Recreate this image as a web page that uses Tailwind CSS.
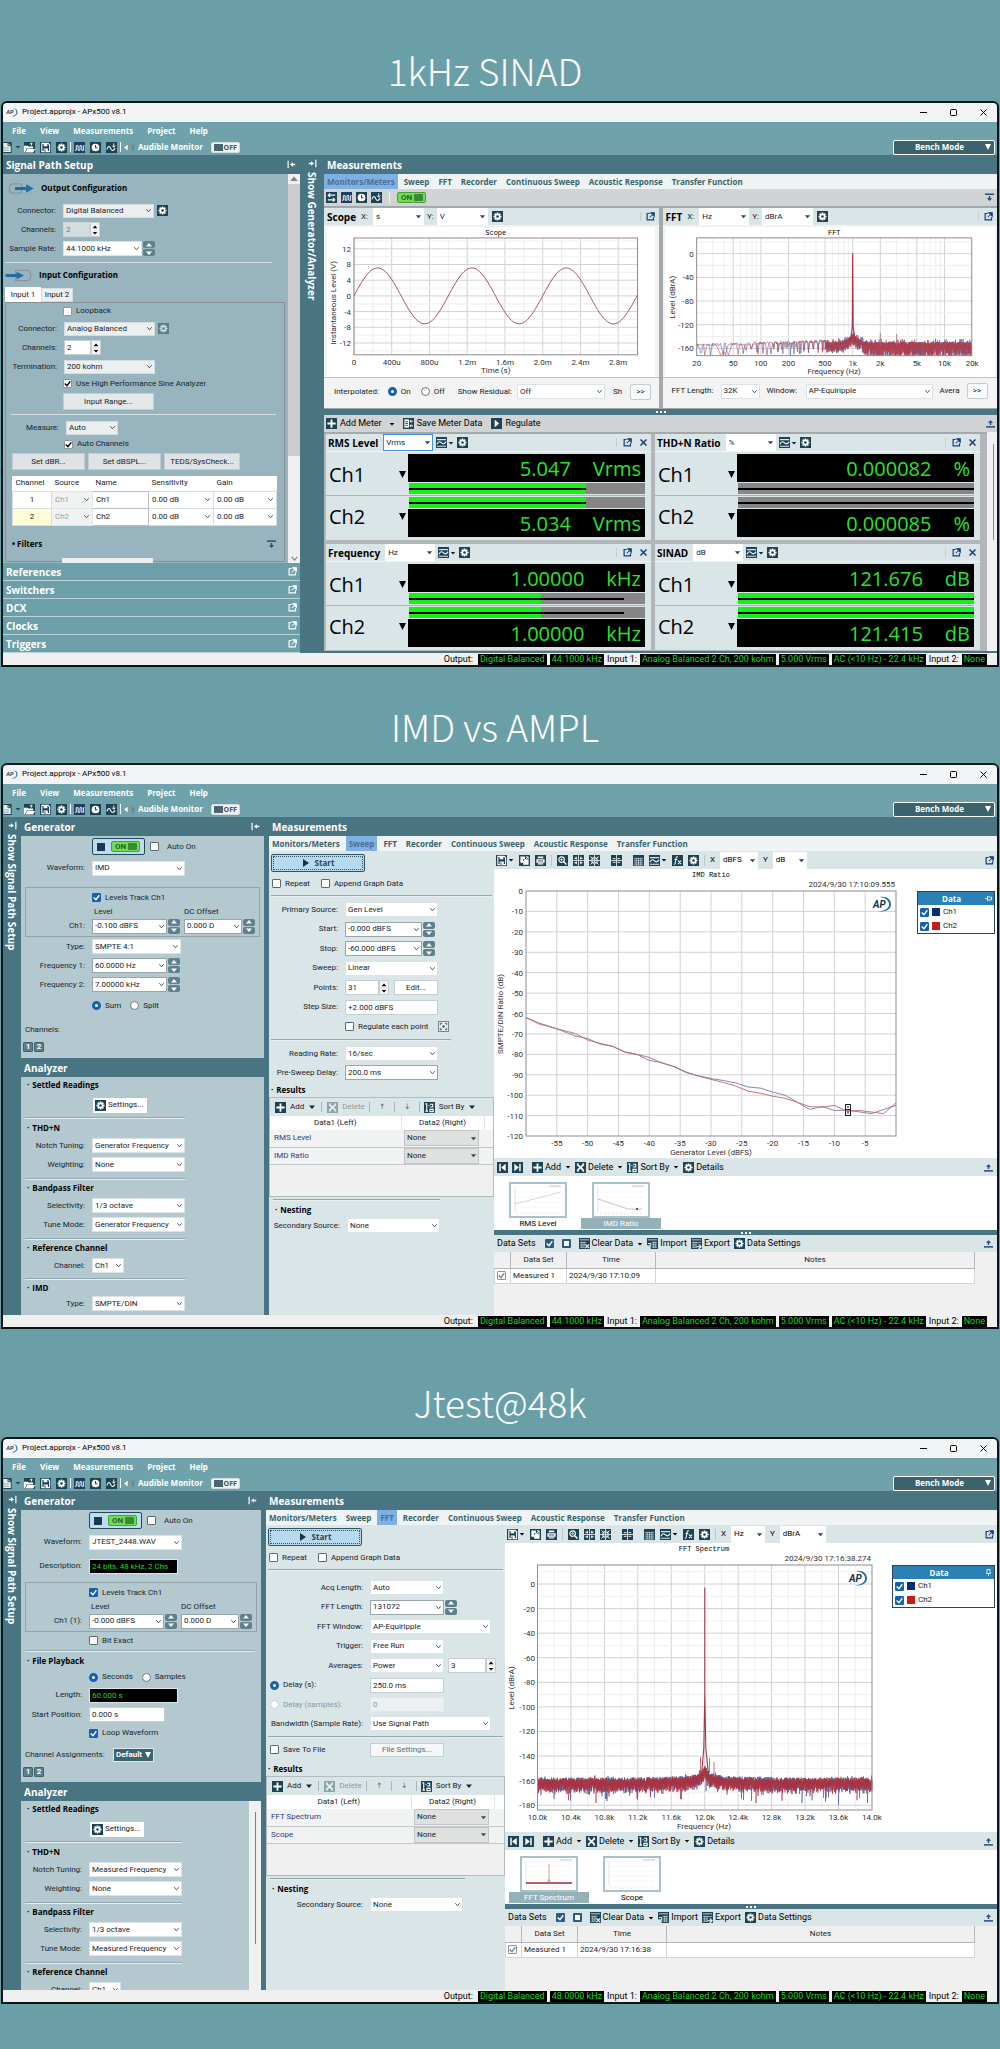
<!DOCTYPE html>
<html lang="en">
<head>
    <meta charset="UTF-8">
    <meta name="viewport" content="width=device-width, initial-scale=1.0">
    <title>APx500 Measurements</title>
    <script src="https://cdn.jsdelivr.net/npm/@tailwindcss/browser@4"></script>
</head>
<body class="bg-[#6b9fa8] font-['Roboto','Noto_Sans',sans-serif] text-[8px] leading-none text-[#16242a]">

    <!-- Icon sprite -->
    <svg class="hidden" xmlns="http://www.w3.org/2000/svg">
        <symbol id="gear" viewBox="0 0 12 12"><rect width="12" height="12" fill="#1d4254"/><g stroke="#fff" stroke-width="1.8"><path d="M6 1.6v8.8M1.6 6h8.8M2.9 2.9l6.2 6.2M9.1 2.9L2.9 9.1"/></g><circle cx="6" cy="6" r="3.2" fill="#fff"/><circle cx="6" cy="6" r="1.4" fill="#1d4254"/></symbol>
        <symbol id="doc" viewBox="0 0 9 12"><rect width="9" height="12" fill="#1d4254"/><path d="M0 1h5l3 3v7H0z" fill="#e8eef0"/><path d="M5 1v3h3" fill="none" stroke="#1d4254"/><path d="M0 6.500h6M0 9h6" stroke="#8fa3aa"/></symbol>
        <symbol id="open" viewBox="0 0 12 12"><rect width="12" height="12" fill="#1d4254"/><path d="M0 4h4l1 1h5v2H3l-2 4.500H0z" fill="#fff"/><path d="M3.500 7.500H12L10 11.500H1.500z" fill="#fff"/><path d="M8 4V1M6.500 2.500L8 1l1.500 1.500" stroke="#fff" fill="none"/></symbol>
        <symbol id="save" viewBox="0 0 12 12"><rect width="12" height="12" fill="#1d4254"/><path d="M2 1.500h7l1.500 1.500v7.500H2z" fill="none" stroke="#fff" stroke-width="1.200"/><path d="M4 1.500h4v3H4zM4 7h4.500v4H4z" fill="#fff"/><path d="M5.500 8v3" stroke="#1d4254"/></symbol>
        <symbol id="square" viewBox="0 0 12 12"><rect width="12" height="12" fill="#1d3f63"/><path d="M1 9h1.500V4h2v5h2V4h2v5h2V4h1" fill="none" stroke="#fff"/></symbol>
        <symbol id="clock" viewBox="0 0 12 12"><rect width="12" height="12" fill="#1d4254"/><circle cx="6" cy="6" r="4.200" fill="#fff"/><path d="M6 3.200V6.300h2" fill="none" stroke="#1d4254" stroke-width="1.100"/></symbol>
        <symbol id="sine" viewBox="0 0 12 12"><rect width="12" height="12" fill="#1d4254"/><path d="M1 8c1-4 3-4 4-1s3 3 5 0" fill="none" stroke="#fff" stroke-width="1.200"/><path d="M8.500 1.500v4M6.800 4l1.700 1.800L10.200 4" fill="none" stroke="#fff"/></symbol>
        <symbol id="speaker" viewBox="0 0 12 12"><path d="M0 6l4-3v6z" fill="#fff"/><path d="M5 3.500L9 .5v11L5 8.500z" fill="#8a9296"/><path d="M10 3v6" stroke="#5d6a6f"/></symbol>
        <symbol id="swap" viewBox="0 0 12 12"><rect width="12" height="12" fill="#1d4254"/><path d="M2 3.500h8M4.500 1.500l-2 2 2 2M2 8.500h8M7.500 6.500l2 2-2 2" fill="none" stroke="#fff" stroke-width="1.400"/></symbol>
        <symbol id="plus" viewBox="0 0 12 12"><rect width="12" height="12" fill="#1d4254"/><path d="M6 1.500v9M1.500 6h9" stroke="#fff" stroke-width="2"/></symbol>
        <symbol id="del" viewBox="0 0 12 12"><rect width="12" height="12" fill="#1d4254"/><path d="M2.500 2.500l7 7M9.500 2.500l-7 7" stroke="#fff" stroke-width="2"/><path d="M2 2h2M8 2h2M2 10h2M8 10h2" stroke="#fff"/></symbol>
        <symbol id="savemeter" viewBox="0 0 12 12"><rect width="12" height="12" fill="#1d4254"/><path d="M1.500 1.500h5v9h-5z" fill="#fff"/><path d="M2.500 4h3M2.500 6h3M2.500 8h3" stroke="#1d4254"/><path d="M11 3.500H7.500M11 8.500H7.500M9 2L7.500 3.500 9 5M9 7L7.500 8.500 9 10" fill="none" stroke="#fff"/></symbol>
        <symbol id="run" viewBox="0 0 12 12"><rect width="12" height="12" fill="#1d4254"/><path d="M4 2l5 4-5 4z" fill="#fff"/></symbol>
        <symbol id="plot" viewBox="0 0 12 12"><rect width="12" height="12" fill="#1d4254"/><path d="M1 2.200h10v1.300H1zM1 9.500h10v1H1z" fill="#dce6ea"/><path d="M1 8c2-4 3.500-3 5-1.500S9 8 11 5" fill="none" stroke="#fff" stroke-width="1.200"/></symbol>
        <symbol id="ext" viewBox="0 0 12 12"><path d="M5 2H1.500v8.500H10V7" fill="none" stroke="currentColor" stroke-width="1.600"/><path d="M6.500 1H11v4.500zM5 7l4-4" fill="currentColor" stroke="currentColor" stroke-width="1.400"/></symbol>
        <symbol id="first" viewBox="0 0 12 12"><rect width="12" height="12" fill="#1d4254"/><path d="M3.300 2v8" stroke="#fff" stroke-width="1.600"/><path d="M9.500 2v8L4.500 6z" fill="#fff"/></symbol>
        <symbol id="last" viewBox="0 0 12 12"><rect width="12" height="12" fill="#1d4254"/><path d="M8.700 2v8" stroke="#fff" stroke-width="1.600"/><path d="M2.500 2v8l5-4z" fill="#fff"/></symbol>
        <symbol id="sort" viewBox="0 0 12 12"><rect width="12" height="12" fill="#1d4254"/><path d="M1.500 2h1.500v8M1.500 10h3M6.500 2.500h3v3h-3M6.500 8h3.500v2.500H6.500zM5 4h1" fill="none" stroke="#fff" stroke-width="1.200"/></symbol>
        <symbol id="copy" viewBox="0 0 12 12"><rect width="12" height="12" fill="#1d4254"/><path d="M1.500 1.500h5v3h-2v4h-3zM6 5h4.500v5.500H4.500V8z" fill="#fff"/><path d="M4 8L9.500 2.500M7.500 2h2.500v2.500" fill="none" stroke="#fff"/></symbol>
        <symbol id="print" viewBox="0 0 12 12"><rect width="12" height="12" fill="#1d4254"/><path d="M3 1.500h6v2H3zM1.500 4.500h9v4h-9z" fill="#fff"/><path d="M3 9.700h6" stroke="#fff" stroke-width="1.200"/><path d="M3 6.500h6" stroke="#1d4254"/></symbol>
        <symbol id="zoom" viewBox="0 0 12 12"><rect width="12" height="12" fill="#1d4254"/><circle cx="5" cy="5" r="3" fill="none" stroke="#fff" stroke-width="1.200"/><path d="M7.300 7.300l3 3" stroke="#fff" stroke-width="1.700"/><path d="M3.500 5h3M5 3.500v3" stroke="#fff" stroke-width=".8"/></symbol>
        <symbol id="expand" viewBox="0 0 12 12"><rect width="12" height="12" fill="#1d4254"/><path d="M6 0v12M0 6h12" stroke="#d9e4e7"/><path d="M1.500 3.500h3M3.500 2v3M7.500 3.500h3M8.500 2v3M1.500 8.500h3M3.500 7v3M7.500 8.500h3M8.500 7v3" stroke="#fff" stroke-width="1.100"/></symbol>
        <symbol id="shrink" viewBox="0 0 12 12"><rect width="12" height="12" fill="#1d4254"/><path d="M6 0v12M0 6h12" stroke="#d9e4e7"/><path d="M1.500 1.500l3 3M4.500 2v2.500H2M10.500 1.500l-3 3M7.500 2v2.500H10M1.500 10.500l3-3M2 7.500h2.500V10M10.500 10.500l-3-3M10 7.500H7.500V10" fill="none" stroke="#fff"/></symbol>
        <symbol id="center" viewBox="0 0 12 12"><rect width="12" height="12" fill="#1d4254"/><path d="M6 0v12M0 6h12" stroke="#d9e4e7"/><path d="M2 4h3M7 4h3M2 8h3M7 8h3" stroke="#fff"/></symbol>
        <symbol id="grid" viewBox="0 0 12 12"><rect width="12" height="12" fill="#1d4254"/><path d="M1 4h10M1 6.300h10M1 8.600h10M1 10.800h10M3.500 3v8.500M6 3v8.500M8.500 3v8.500" stroke="#c9d6db" stroke-width=".8"/></symbol>
        <symbol id="fx" viewBox="0 0 12 12"><rect width="12" height="12" fill="#1d4254"/><path d="M6.500 2c-2-.5-2 1-2.300 3L3.500 9c-.2 1-.8 1.200-1.500 1M2.800 5h3M6.500 6l3.500 4M10 6l-3.500 4" fill="none" stroke="#fff" stroke-width="1.100"/></symbol>
        <symbol id="data" viewBox="0 0 12 12"><rect width="12" height="12" fill="#1d4254"/><path d="M1 2h10" stroke="#c9d6db"/><path d="M1 5h7M1 7.500h6M1 10h5M3 4v7M5.500 4v7" stroke="#c9d6db" stroke-width=".8"/><path d="M7 7l4 4M11 7l-4 4" stroke="#fff" stroke-width="1.300"/></symbol>
        <symbol id="import" viewBox="0 0 12 12"><rect width="12" height="12" fill="#1d4254"/><path d="M1 2h10" stroke="#c9d6db"/><path d="M5 5h6M5 7.500h6M5 10h6M7 4v7M9 4v7" stroke="#c9d6db" stroke-width=".8"/><path d="M0 8h4v4H0z" fill="#d9e4e7"/><path d="M1 6h3v3" fill="none" stroke="#fff"/></symbol>
        <symbol id="export" viewBox="0 0 12 12"><rect width="12" height="12" fill="#1d4254"/><path d="M1 2h10" stroke="#c9d6db"/><path d="M1 5h10M1 7.500h5M1 10h5M3 4v7M5.500 4v7" stroke="#c9d6db" stroke-width=".8"/><path d="M6 9.500h4.500M8.500 7l2.500 2.500L8.500 12" fill="none" stroke="#fff" stroke-width="1.200"/></symbol>
        <symbol id="dockdown" viewBox="0 0 12 12"><path d="M0 1.500h12" stroke="#2b4a7a" stroke-width="2"/><path d="M2.500 7h7L6 10.500zM5 4h2v3H5z" fill="#2b4a7a"/></symbol>
        <symbol id="dockup" viewBox="0 0 12 12"><path d="M0 10.500h12" stroke="#2b4a7a" stroke-width="2"/><path d="M2.500 5h7L6 1.500zM5 5h2v3H5z" fill="#2b4a7a"/></symbol>
        <symbol id="collapse" viewBox="0 0 12 12"><path d="M1.500 1v10" stroke="#fff" stroke-width="1.600"/><path d="M4 6l4-3v2h3v2H8v2z" fill="#fff"/></symbol>
        <symbol id="expandbar" viewBox="0 0 12 12"><path d="M10.500 1v10" stroke="#fff" stroke-width="1.600"/><path d="M8 6L4 3v2H1v2h3v2z" fill="#fff"/></symbol>
        <symbol id="regpt" viewBox="0 0 12 12"><rect x=".5" y=".5" width="11" height="11" fill="#e9eff1" stroke="#6d7f86"/><path d="M2.500 4.500v-2h2M7.500 2.500h2v2M9.500 7.500v2h-2M4.500 9.500h-2v-2" fill="none" stroke="#43535a"/><circle cx="6" cy="6" r="1.300" fill="#43535a"/></symbol>
        <symbol id="outcfg" viewBox="0 0 28 14"><path d="M14 2H4a3 3 0 0 0-3 3v4a3 3 0 0 0 3 3h10z" fill="none" stroke="#8f9699" stroke-width="1.500"/><path d="M7 5.500h12V2.500L27 7l-8 4.500V8.500H7z" fill="#1d6fa5"/></symbol>
        <symbol id="incfg" viewBox="0 0 28 14"><path d="M11 1.500h12a4 4 0 0 1 4 4v3a4 4 0 0 1-4 4H11z" fill="none" stroke="#8f9699" stroke-width="1.500"/><path d="M0 5.500h12V3l8 4-8 4V8.500H0z" fill="#1d6fa5"/></symbol>
        <symbol id="chev" viewBox="0 0 8 8"><path d="M1.500 2.500L4 5.500l2.500-3" fill="none" stroke="currentColor"/></symbol>
        <symbol id="caret" viewBox="0 0 8 8"><path d="M1 2.500h6L4 6z" fill="currentColor"/></symbol>
        <symbol id="drop" viewBox="0 0 8 8"><path d="M0 0h8L4 8z" fill="currentColor"/></symbol>
        <symbol id="up" viewBox="0 0 8 8"><path d="M1 5.500h6L4 2z" fill="currentColor"/></symbol>
        <symbol id="tick" viewBox="0 0 8 8"><path d="M1.500 4l2 2 3-4" fill="none" stroke="currentColor" stroke-width="1.200"/></symbol>
    </svg>

    <main class="pb-[46px]">
        <h1 class="flex h-[101px] items-center justify-center pt-[39px] pr-[30px] font-['Noto_Sans_CJK_SC',sans-serif] text-[37px] font-light text-white">1kHz SINAD</h1>
        <section id="win1" class="mx-px overflow-hidden rounded-t-md border-2 border-[#0a1518] bg-[#497481]"></section>

        <h2 class="flex h-[96px] items-center justify-center pt-[22px] pr-[10px] font-['Noto_Sans_CJK_SC',sans-serif] text-[37px] font-light text-white">IMD vs AMPL</h2>
        <section id="win2" class="mx-px overflow-hidden rounded-t-md border-2 border-[#0a1518] bg-[#497481]"></section>

        <h2 class="flex h-[108px] items-center justify-center pt-[38px] font-['Noto_Sans_CJK_SC',sans-serif] text-[37px] font-light text-white">Jtest@48k</h2>
        <section id="win3" class="mx-px overflow-hidden rounded-t-md border-2 border-[#0a1518] bg-[#497481]"></section>
    </main>

    <script>
        let uid = 0;
        const nextId = () => 'f' + (++uid);
        const heavy = "font-['Open_Sans','Noto_Sans',sans-serif] font-bold";

        // ---- small parts ----
        const ico = (name, cls = 'size-[11px]') => `<svg class="${cls} shrink-0"><use href="#${name}"/></svg>`;
        const caret = () => ico('caret', 'size-[6px]');
        const sep = (cls = '') => `<div class="h-[2px] border-t border-b border-t-[#93a8ae] border-b-[#e6eef0] ${cls}"></div>`;

        // drop-down list
        const sel = (value, w, cls = 'h-[15px] border-[#dde3e5] bg-white', arrow = 'chev') => id => `
            <span class="relative flex shrink-0 items-center ${w}">
                <select id="${id}" aria-label="${value}" class="w-full appearance-none border pl-[2px] pr-2 ${cls}"><option>${value}</option></select>
                <svg class="pointer-events-none absolute right-[2px] size-[7px] text-[#39464b]"><use href="#${arrow}"/></svg>
            </span>`;
        const flat = (value, w) => sel(value, w, 'h-[17px] border-white bg-white', 'caret');
        const combo = 'h-[15px] border-[#98a4a8] bg-white';

        const box = (value, w, cls = 'border-[#c5ced1] bg-white', extra = '') => id =>
            `<input id="${id}" type="text" aria-label="${value}" value="${value}" ${extra} class="h-[15px] shrink-0 border pl-[2px] ${w} ${cls}">`;

        // teal up/down pair
        const spin = () => `
            <span class="ml-px flex w-3 shrink-0 flex-col gap-px">
                <button type="button" aria-label="Increase" class="flex h-[7px] items-center justify-center rounded-[2px] bg-[#5d808c] text-white">${ico('up', 'size-[8px]')}</button>
                <button type="button" aria-label="Decrease" class="flex h-[7px] items-center justify-center rounded-[2px] bg-[#5d808c] text-white">${ico('caret', 'size-[8px]')}</button>
            </span>`;
        // plain numeric up/down pair
        const nud = () => `
            <span class="flex w-[10px] shrink-0 flex-col border border-[#c5ced1] bg-[#f3f3f3] text-black">
                <button type="button" aria-label="Increase" class="flex h-[7px] items-center justify-center">${ico('up', 'size-[6px]')}</button>
                <button type="button" aria-label="Decrease" class="flex h-[6px] items-center justify-center">${ico('caret', 'size-[6px]')}</button>
            </span>`;

        const blue = 'border-[#5c6b70] bg-white checked:border-[#1560b0] checked:bg-[#1560b0]';
        const plain = 'border-[#8b979b] bg-white';
        const slate = 'border-[#2c5a80] border-2 bg-white checked:bg-[#2c5a80]';
        const check = (text, on, skin = blue, cls = 'gap-1', mark = '') => `
            <label class="flex items-center whitespace-nowrap ${cls}">
                <span class="relative flex size-[9px] shrink-0 ${mark || (skin === plain ? 'text-black' : 'text-white')}">
                    <input type="checkbox" aria-label="${text || 'Select'}" ${on ? 'checked' : ''} class="peer size-[9px] appearance-none rounded-[1px] border ${skin}">
                    <svg class="pointer-events-none absolute inset-0 hidden size-[9px] peer-checked:block"><use href="#tick"/></svg>
                </span>${text}
            </label>`;
        const radio = (text, name, on, off = '') => `
            <label class="flex items-center gap-1 ${off ? 'text-[#8a989d]' : ''}">
                <input type="radio" name="${name}" ${on ? 'checked' : ''} ${off} class="size-[9px] appearance-none rounded-full border border-[#6b777b] bg-white checked:border-[3px] checked:border-[#1560b0] disabled:border-[#c3cdd0]">${text}
            </label>`;

        // label + control line
        const row = (label, ctl, after = '', lw = 'w-[64px]', h = 'h-[19px]') => {
            const id = nextId();
            return `<div class="flex items-center ${h}"><label for="${id}" class="mr-[7px] shrink-0 whitespace-nowrap text-right ${lw}">${label}</label>${ctl(id)}${after}</div>`;
        };
        const one = ctl => ctl(nextId());
        const head = (text, cls = 'h-4 pl-[6px]') => `<h4 class="flex items-center gap-[3px] text-black ${heavy} ${cls}"><span>·</span>${text}</h4>`;
        const btn = (text, cls) => `<button type="button" class="shrink-0 border border-[#c3ccd0] ${cls}">${text}</button>`;
        const toggle = () => `<button type="button" class="flex h-[11px] w-[29px] items-center justify-between rounded-[2px] border border-[#4b9d3a] bg-[#6fdc52] pr-[2px] pl-[3px] font-bold text-[#23612d]">ON<span class="h-[7px] w-[9px] rounded-[1px] bg-[#3a8a34]"></span></button>`;
        const swoosh = w => `<svg class="${w}" viewBox="0 0 22 16"><text x="0" y="11.500" class="fill-[#14466b] text-[10px] font-bold italic">AP</text><path d="M12 1c5-.5 8 2.500 8 6.500S17 15 9 15c6-1 9-4 9-7.500S16 2 12 1z" fill="#1d6fa5"/></svg>`;
        const dots = h => `<div class="flex items-center justify-center gap-[2px] ${h}"><i class="size-[2px] bg-white"></i><i class="size-[2px] bg-white"></i><i class="size-[2px] bg-white"></i></div>`;

        // ---- window frame ----
        const top_ = () => `
            <header class="flex h-[19px] items-center bg-[#f3f4f5] pb-px pl-[3px] text-black">
                ${swoosh('h-[9px] w-[13px]')}
                <span class="ml-[3px]">Project.approjx - APx500 v8.1</span>
                <span class="ml-auto flex items-center gap-[23px] pr-[10px]">
                    <button type="button" aria-label="Minimize"><svg class="size-[7px]" viewBox="0 0 7 7"><path d="M0 3.500h7" stroke="#000"/></svg></button>
                    <button type="button" aria-label="Maximize"><svg class="size-[7px]" viewBox="0 0 7 7"><rect x=".5" y=".5" width="6" height="6" rx="1" fill="none" stroke="#000"/></svg></button>
                    <button type="button" aria-label="Close"><svg class="size-[7px]" viewBox="0 0 7 7"><path d="M.5.5l6 6M6.500.5l-6 6" stroke="#000"/></svg></button>
                </span>
            </header>
            <div class="h-[33px] bg-[#6fa2aa] text-white ${heavy}">
                <nav class="flex h-[17px] items-center gap-[14px] pl-[9px]">
                    <a href="#">File</a><a href="#">View</a><a href="#">Measurements</a><a href="#">Project</a><a href="#">Help</a>
                </nav>
                <div class="flex h-4 items-center">
                    ${ico('doc', 'h-[11px] w-[9px]')}<span class="mx-[3px] text-[#1d4254]">${caret()}</span>
                    <span class="flex gap-[5px]">${ico('open')}${ico('save')}${ico('gear')}</span>
                    <span class="mx-[3px] h-[10px] w-px bg-white"></span>
                    <span class="flex gap-[5px]">${ico('square')}${ico('clock')}${ico('sine')}</span>
                    <span class="mx-[3px] h-[10px] w-px bg-white"></span>
                    ${ico('speaker')}<span class="ml-[3px]">Audible Monitor</span>
                    <button type="button" class="ml-2 flex h-[11px] w-[29px] items-center justify-between rounded-[2px] border border-[#d5dcde] bg-[#eef1f2] px-[2px] text-[7px] text-[#3b5660]"><span class="h-[7px] w-[9px] bg-[#4a6470]"></span>OFF</button>
                    <button type="button" class="mr-[2px] ml-auto flex h-[15px] w-[102px] items-center rounded-[2px] border border-white bg-[#3b626d]"><span class="flex-1 text-center">Bench Mode</span>${ico('drop', 'mr-[3px] size-[6px]')}</button>
                </div>
            </div>`;

        const badge = t => `<output class="flex h-[11px] items-center bg-black px-[2px] text-[#1fd61f]">${t}</output>`;
        const foot = rate => `
            <footer class="flex h-3 items-center justify-end gap-[3px] bg-[#f0f0f0] pr-[10px] text-[9px] text-black">
                <span class="mr-[2px]">Output:</span>${badge('Digital Balanced')}${badge(rate)}
                <span>Input 1:</span>${badge('Analog Balanced 2 Ch, 200 kohm')}${badge('5.000 Vrms')}${badge('AC (&lt;10 Hz) - 22.4 kHz')}
                <span>Input 2:</span>${badge('None')}
            </footer>`;

        const side = (text, w) => `
            <aside class="flex shrink-0 flex-col items-center pt-1 ${w}">
                ${ico('expandbar', 'size-[9px]')}
                <button type="button" class="mt-[4px] text-[10px] text-white [writing-mode:vertical-rl] ${heavy}">${text}</button>
            </aside>`;

        const bar = (text, icon = '') => `<h3 class="flex h-[19px] items-center justify-between pr-[4px] pl-[3px] text-[10px] text-white ${heavy}">${text}${icon}</h3>`;

        const tabs = active => `
            <nav class="flex h-[15px] items-stretch gap-[3px] bg-[#eff3f4] text-[#38646f] ${heavy}">
                ${['Monitors/Meters', 'Sweep', 'FFT', 'Recorder', 'Continuous Sweep', 'Acoustic Response', 'Transfer Function'].map(t =>
                    `<a href="#" class="flex items-center px-[3px] ${t === active ? 'bg-[#7db0e3] text-[#4c6f8f]' : ''}">${t}</a>`).join('')}
            </nav>`;

        // ---- charts ----
        let seed = 7;
        const rnd = () => (seed = (seed * 16807) % 2147483647) / 2147483647;
        const vline = (x, y1, y2, c) => `<path d="M${x} ${y1}V${y2}" stroke="${c}"/>`;
        const hline = (y, x1, x2, c) => `<path d="M${x1} ${y}H${x2}" stroke="${c}"/>`;
        const tx = (x, y, t, anchor = 'middle') => `<text x="${x}" y="${y}" text-anchor="${anchor}">${t}</text>`;
        const major = '#d2d2d4', minor = '#efeff0';
        const frame = (x, y, w, h) => `<rect x="${x}" y="${y}" width="${w}" height="${h}" fill="none" stroke="#8c8c90"/>`;
        const svg = (w, h, body) => `<svg class="block h-auto w-full bg-white fill-[#2f2f36] text-[8px]" viewBox="0 0 ${w} ${h}">${body}</svg>`;
        const title = (x, y, t) => `<text x="${x}" y="${y}" text-anchor="middle" class="fill-black font-['Liberation_Mono',monospace] text-[7px]">${t}</text>`;
        const ylab = (x, y, t) => `<text transform="translate(${x} ${y}) rotate(-90)" text-anchor="middle">${t}</text>`;
        const line = (d, c, w = 1) => `<path d="${d}" fill="none" stroke="${c}" stroke-width="${w}" stroke-linejoin="round"/>`;

        function scopeChart() {
            let s = '';
            for (let i = 0; i < 15; i++) s += vline(27 + i * 18.9, 11, 128, i % 2 ? minor : major);
            for (let v = -14; v <= 14; v += 2) s += hline(69 - v * 3.93, 27, 311, v % 4 ? minor : major);
            for (let v = -12; v <= 12; v += 4) s += tx(24, 72 - v * 3.93, v, 'end');
            ['0', '400u', '800u', '1.2m', '1.6m', '2.0m', '2.4m', '2.8m'].forEach((t, i) => s += tx(27 + i * 37.8, 138, t));
            let d = '';
            for (let x = 0; x <= 284; x += 2) d += (x ? 'L' : 'M') + (27 + x) + ' ' + (69 - 28 * Math.sin(x / 94.5 * 2 * Math.PI)).toFixed(1);
            return svg(328, 150, s + frame(27, 11, 284, 117) + line(d, '#a85566') + title(169, 8, 'Scope') + ylab(9, 76, 'Instantaneous Level (V)') + tx(169, 146, 'Time (s)'));
        }

        function meterFft() {
            const X = f => 32 + Math.log10(f / 20) * 92.8, Y = v => 27 - v * 0.598;
            let s = '';
            [10, 100, 1000, 10000].forEach(b => { for (let k = 1; k < 10; k++) { const f = b * k; if (f > 20 && f < 20000) s += vline(X(f).toFixed(1), 11, 130, [1, 2, 5].includes(k) ? major : minor); } });
            for (let v = 20; v >= -160; v -= 20) s += hline(Y(v), 32, 310, v % 40 ? minor : major);
            for (let v = 0; v >= -160; v -= 40) s += tx(29, Y(v) + 3, v, 'end');
            [[20, '20'], [50, '50'], [100, '100'], [200, '200'], [500, '500'], [1000, '1k'], [2000, '2k'], [5000, '5k'], [10000, '10k'], [20000, '20k']].forEach(([f, t]) => s += tx(X(f), 140, t));
            [['#4a5c9e', 0], ['#b5404d', 1]].forEach(([c, k]) => {
                let d = '';
                // wide lobes first, then closer ones, then dense noise
                for (let x = 32; x < 162; x += x < 110 ? 1 : 0.7) {
                    const period = x < 60 ? 5 : x < 85 ? 3.5 : x < 110 ? 2.2 : 1.3;
                    const p = Math.abs(Math.sin((x - 32 + k * 5) / period + Math.sin(x / 7 + k)));
                    const y = Math.min(130, 121 - (x - 32) * 0.03 + (p < 0.45 ? (0.45 - p) * 26 : 0) - rnd() * 3);
                    d += (d ? 'L' : 'M') + x.toFixed(1) + ' ' + y.toFixed(1);
                }
                for (let x = 162; x <= 310; x += 0.5) {
                    const lift = 9 * Math.exp(-Math.abs(x - 189.7) / 6);
                    const edge = 119 - lift - rnd() * 3 * (rnd() > 0.8 ? 2 : 1);
                    d += `L${x.toFixed(1)} ${edge.toFixed(1)}L${x.toFixed(1)} ${(edge + 4 + rnd() * (x > 200 ? 12 : 6)).toFixed(1)}`;
                }
                s += `<g clip-path="url(#mclip)">${line(d, c, 0.6)}</g>`;
            });
            s += line('M187.500 116L189.300 100L189.700 27L190.100 100L192 116', '#a83446', 1.200) + line('M217.600 120V107M234 120V108', '#c0606c', 0.8);
            return svg(334, 152, `<clipPath id="mclip"><rect x="32" y="11" width="278" height="119"/></clipPath>` + s + frame(32, 11, 278, 119) + title(171, 8, 'FFT') + ylab(10, 71, 'Level (dBrA)') + tx(171, 149, 'Frequency (Hz)'));
        }

        const apLogo = (x, y) => `<g transform="translate(${x} ${y})"><text x="0" y="11" class="fill-[#17324a] text-[10px] font-bold italic">AP</text><path d="M7 0c7-1 11 2.500 11 7.500S13 15 5 14.500C12 14 16 11.500 16 7.500S13 1 7 0z" fill="#1d6fa5"/></g>`;

        function imdChart() {
            const X = v => 32 + (v + 60) * 6.167, Y = v => 22 - v * 2.042;
            let s = '';
            for (let v = -55; v < 0; v += 5) s += vline(X(v).toFixed(1), 22, 267, major) + tx(X(v), 277, v);
            for (let v = -10; v > -120; v -= 10) s += hline(Y(v).toFixed(1), 32, 402, major);
            for (let v = 0; v >= -120; v -= 10) s += tx(29, Y(v) + 3, v, 'end');
            const a = [[-60, -62], [-58, -64.5], [-55, -67.5], [-52, -71], [-50, -72.3], [-48, -75], [-46, -76], [-44, -79], [-42, -80], [-40, -83], [-38, -84], [-36, -86], [-34, -89], [-32, -90.5], [-30, -91.8], [-28, -92.8], [-26, -94], [-24, -96], [-22, -96.5], [-20, -98.5], [-18, -100], [-16, -103.5], [-14, -107], [-12, -105.5], [-10, -107.5], [-8, -107.3], [-4, -109], [0, -105]];
            const b = [[-60, -62], [-58, -65], [-55, -67.5], [-52, -69.8], [-50, -73], [-48, -74.6], [-46, -76], [-44, -78.7], [-42, -80], [-40, -81.5], [-38, -84.3], [-36, -86], [-34, -88.7], [-32, -90.7], [-30, -92.2], [-28, -93.8], [-26, -95.5], [-24, -98], [-22, -99], [-20, -100.5], [-18, -101.5], [-16, -103.5], [-14, -105.6], [-12, -105.9], [-10, -105], [-8, -107.8], [-6, -107.5], [-2, -109], [0, -103.7]];
            const path = p => p.map(([x, y], i) => (i ? 'L' : 'M') + X(x).toFixed(1) + ' ' + Y(y).toFixed(1)).join('');
            s += frame(32, 22, 370, 245) + line(path(a), '#6c7fae', 0.9) + line(path(b), '#c9606c', 0.9);
            s += `<g fill="none" stroke="#222"><rect x="351.500" y="235.500" width="5" height="5"/><rect x="351.500" y="240.500" width="5" height="6"/><path d="M354 237v2M354 242v3"/></g>`;
            return svg(503, 289, s + title(217, 8, 'IMD Ratio') + tx(401, 18, '2024/9/30 17:10:09.555', 'end') + apLogo(379, 28) + ylab(9, 145, 'SMPTE/DIN Ratio (dB)') + tx(217, 286, 'Generator Level (dBFS)'));
        }

        function jtestChart() {
            const X = k => 32.5 + (k - 10) * 83.6, Y = v => 41 - v * 1.229;
            let s = '';
            for (let i = 1; i < 20; i++) s += vline(X(10 + i * 0.2).toFixed(1), 22, 267, i % 2 ? minor : major);
            for (let v = 10; v >= -180; v -= 10) s += hline(Y(v).toFixed(1), 33, 367, v % 20 ? minor : major);
            for (let v = 0; v >= -180; v -= 20) s += tx(30, Y(v) + 3, v, 'end');
            for (let i = 0; i <= 10; i++) s += tx(X(10 + i * 0.4), 277, (10 + i * 0.4).toFixed(1) + 'k');
            ['#4a5c9e', '#ad3340'].forEach(c => {
                let d = '';
                for (let x = 33; x <= 367; x += 0.5) {
                    const k = Math.abs(x - 200) / 83.6;
                    const lift = 3 * Math.exp(-k / 0.4) + 7 * Math.exp(-k / 0.05);
                    const hi = -159.5 + lift + (rnd() - 0.5) * 4 + (rnd() > 0.97 ? 2 : 0);
                    const lo = hi - 4 - rnd() * 6 - (rnd() > 0.93 ? rnd() * 10 : 0);
                    d += `${d ? 'L' : 'M'}${x.toFixed(1)} ${Y(hi).toFixed(1)}L${x.toFixed(1)} ${Y(lo).toFixed(1)}`;
                }
                s += line(d, c, 0.6);
            });
            s += line(`M196.500 232L198.800 205L199.800 150V45V150L200.800 205L203.500 232`, '#a83446', 1.100);
            s += line('M195.500 232V214M204.500 230V215M209 234V219', '#b0505c', 0.8);
            return svg(492, 289, s + frame(32.5, 22, 334.5, 245) + title(199, 8, 'FFT Spectrum') + tx(366, 18, '2024/9/30 17:16:38.274', 'end') + apLogo(344, 28) + ylab(9, 145, 'Level (dBrA)') + tx(199, 286, 'Frequency (Hz)'));
        }

        // ---- window 1: monitors/meters ----
        const bare = 'h-[15px] border-transparent bg-transparent';
        const chRow = (n, bg) => `
            <tr class="h-[17px]">
                <td class="border border-[#d8dde0] text-center ${bg}">${n}</td>
                <td class="border border-[#e2e6e8] bg-[#f1f2f2] text-[#9a9fa2]">${one(sel('Ch' + n, 'w-full', bare))}</td>
                <td class="border border-[#b9c0c4]">${one(box('Ch' + n, 'w-full', 'border-transparent bg-white'))}</td>
                <td class="border border-[#d8dde0]">${one(sel('0.00 dB', 'w-full', bare))}</td>
                <td class="border border-[#d8dde0]">${one(sel('0.00 dB', 'w-full', bare))}</td>
            </tr>`;
        const grey = 'h-[14px] border-[#d5dcde] bg-[#eceff0]';

        const signalPath = `
            <div class="flex h-[389px] overflow-hidden bg-[#98b4be]">
                <div class="min-w-0 flex-1 pl-[2px]">
                    <h4 class="flex h-[27px] items-center gap-[6px] pl-[3px] pt-px text-black ${heavy}">${ico('outcfg', 'h-[13px] w-[27px]')}Output Configuration</h4>
                    ${row('Connector:', sel('Digital Balanced', 'w-[91px]', grey), `<span class="ml-[3px]">${ico('gear')}</span>`, 'w-[51px]')}
                    ${row('Channels:', box('2', 'w-[27px]', 'border-[#cdd5d8] bg-[#d3dcdf] text-[#6b7b82]', 'disabled'), nud(), 'w-[51px]')}
                    ${row('Sample Rate:', sel('44.1000 kHz', 'w-[79px]'), spin(), 'w-[51px]')}
                    <div class="mt-1 mr-4 border-t border-[#d3dfe3]"></div>
                    <h4 class="flex h-[24px] items-center gap-[7px] text-black ${heavy}">${ico('incfg', 'h-[13px] w-[27px]')}Input Configuration</h4>
                    <div class="flex items-end">
                        <button type="button" class="h-[15px] w-9 bg-white">Input 1</button>
                        <button type="button" class="h-[14px] w-8 border border-[#d5dcde] bg-[#eceff0]">Input 2</button>
                    </div>
                    <div class="mr-[3px] h-[260px] border border-[#858f94]">
                        <div class="flex h-4 items-center pl-[57px]">${check('Loopback', false, plain)}</div>
                        ${row('Connector:', sel('Analog Balanced', 'w-[91px]', grey), `<span class="ml-[3px] opacity-50">${ico('gear')}</span>`, 'w-[51px]')}
                        ${row('Channels:', box('2', 'w-[27px]'), nud(), 'w-[51px]')}
                        ${row('Termination:', sel('200 kohm', 'w-[91px]', grey), '', 'w-[51px]')}
                        <div class="flex h-[15px] items-center pl-[57px]">${check('Use High Performance Sine Analyzer', true, plain)}</div>
                        <div class="mt-[2px] pl-[57px]">${btn('Input Range...', 'block h-[17px] w-[91px] bg-[#e3e8ea]')}</div>
                        <div class="mt-1 mr-2 ml-1 border-t border-[#d3dfe3]"></div>
                        <div class="mt-[3px]">${row('Measure:', sel('Auto', 'w-[52px]', grey), '', 'w-[53px]')}</div>
                        <div class="flex h-[14px] items-center pl-[58px]">${check('Auto Channels', true, plain)}</div>
                        <div class="mt-[2px] flex gap-[3px] pl-[6px]">
                            ${btn('Set dBR...', 'h-[17px] w-[73px] bg-[#dfe3e5]')}${btn('Set dBSPL...', 'h-[17px] w-[73px] bg-[#dfe3e5]')}${btn('TEDS/SysCheck...', 'h-[17px] w-[76px] bg-[#dfe3e5]')}
                        </div>
                        <table class="mt-[6px] ml-[6px] w-[265px] table-fixed border-collapse bg-white text-left">
                            <thead><tr class="h-[15px]">
                                <th class="w-[39px] pl-[3px] font-normal">Channel</th><th class="w-[41px] pl-[3px] font-normal">Source</th><th class="w-[56px] pl-[3px] font-normal">Name</th><th class="w-[65px] pl-[3px] font-normal">Sensitivity</th><th class="pl-[3px] font-normal">Gain</th>
                            </tr></thead>
                            <tbody>${chRow(1, '')}${chRow(2, 'bg-[#fffdd8]')}</tbody>
                        </table>
                        <div class="mt-[9px] flex h-[19px] items-center justify-between pr-2 pl-[6px] text-black ${heavy}"><span>• Filters</span>${ico('dockdown', 'size-[9px]')}</div>
                        <div class="mt-[4px] ml-[56px] h-[6px] w-[91px] bg-[#eceff0]"></div>
                    </div>
                </div>
                <div class="flex w-3 flex-col items-center bg-[#f0f0f0] text-[#7c8589]">
                    ${ico('up', 'size-[10px]')}<div class="h-[272px] w-full bg-[#cdcdcd]"></div><span class="mt-auto">${ico('chev', 'size-[9px]')}</span>
                </div>
            </div>
            ${['References', 'Switchers', 'DCX', 'Clocks', 'Triggers'].map(t => `
                <button type="button" class="flex h-[18px] w-full items-center justify-between border-b border-[#b9d3d8] bg-[#6c9fa9] pr-[3px] pl-[3px] text-[10px] text-white ${heavy}">${t}${ico('ext', 'size-[9px]')}</button>`).join('')}`;

        const graphHead = (name, x, xw, y, yw) => `
            <div class="flex h-[17px] items-center bg-[#dae5e8] pr-[4px]">
                <b class="ml-[3px] text-[10px] text-black ${heavy}">${name}</b>
                <span class="mx-[5px]">X:</span>${one(flat(x, xw))}<span class="mx-[3px]">Y:</span>${one(flat(y, yw))}
                <span class="ml-[4px]">${ico('gear')}</span>
                <span class="ml-auto border-l border-[#c2ced2] pl-[5px] text-[#173e7c]">${ico('ext', 'size-[9px]')}</span>
            </div>`;

        const meter = (name, unit, uw, on, rows, pct, linePct) => {
            const strip = `<div class="h-[11px] bg-[#868686] bg-clip-content pl-px">
                    <div class="relative h-full"><div class="h-full bg-[#16f016]" style="width:${pct}%"></div><div class="absolute top-[5px] h-[2px] bg-black" style="width:${linePct}%"></div></div>
                </div>`;
            const val = (v, u, cls) => `<div class="flex h-7 items-center justify-end gap-[22px] bg-black pt-[2px] pr-1 font-['Open_Sans','Noto_Sans',sans-serif] text-[20px] text-[#2fe02f] ${cls}"><output>${v}</output><span>${u}</span></div>`;
            const ch = (n, html) => `<div class="flex h-[41px]"><div class="flex w-[82px] items-center justify-between pr-[2px] pl-[3px] font-['Open_Sans','Noto_Sans',sans-serif] text-[20px] text-black">Ch${n}${ico('drop', 'size-[7px]')}</div><div class="min-w-0 flex-1">${html}</div></div>`;
            return `
            <article class="bg-[#dae5e8]">
                <div class="flex h-[17px] items-center pr-1">
                    <b class="mr-[5px] ml-[2px] text-[10px] whitespace-nowrap text-black ${heavy}">${name}</b>
                    ${one(sel(unit, uw, on ? 'h-[17px] border-[#4a90d9] bg-white' : 'h-[17px] border-white bg-white', 'caret'))}
                    <span class="ml-[3px] flex items-center gap-px">${ico('plot')}${caret()}</span><span class="ml-[3px]">${ico('gear')}</span>
                    <span class="ml-auto flex items-center gap-2 border-l border-[#c2ced2] pl-[6px] text-[#173e7c]">${ico('ext', 'size-[9px]')}<button type="button" aria-label="Close meter"><svg class="size-[7px]" viewBox="0 0 7 7"><path d="M.5.5l6 6M6.500.5l-6 6" stroke="currentColor" stroke-width="1.500"/></svg></button></span>
                </div>
                <div class="border-t border-[#eef3f4] pt-[2px] pr-[6px] pb-[3px]">
                    ${ch(1, val(rows[0], rows[2], '') + `<div class="mt-px">${strip}</div>`)}
                    <div class="h-px bg-[#a9b3b7]"></div>
                    ${ch(2, `<div class="pt-px">${strip}</div>` + val(rows[1], rows[2], 'mt-px'))}
                </div>
            </article>`;
        };

        document.getElementById('win1').innerHTML = top_() + `
            <div class="flex">
                <div class="w-[297px] shrink-0">${bar('Signal Path Setup', ico('collapse', 'size-[9px]'))}${signalPath}</div>
                ${side('Show Generator/Analyzer', 'w-6')}
                <div class="min-w-0 flex-1">
                    ${bar('Measurements')}
                    ${tabs('Monitors/Meters')}
                    <div class="flex h-[18px] items-center gap-[4px] border-b border-[#9fa6a9] bg-[#d2d3d4] px-[2px]">
                        ${ico('swap')}${ico('square')}${ico('clock')}${ico('sine')}<span class="mx-[3px] h-[11px] w-px bg-[#f3f3f3]"></span>${toggle()}
                        <span class="ml-auto mr-px">${ico('dockdown', 'size-[9px]')}</span>
                    </div>
                    <div class="grid grid-cols-2 gap-1 border-b border-[#9fa6a9] bg-[#a4a9ac] pt-px">
                        <div class="bg-[#f3f3f3]">
                            ${graphHead('Scope', 's', 'w-[51px]', 'V', 'w-[51px]')}
                            <div class="border-t-2 border-b border-t-[#f3f3f3] border-b-[#bfc4c6] pr-1 pl-[3px]">${scopeChart()}</div>
                            <div class="flex h-7 items-center gap-1 pl-[10px]">
                                <span class="mr-[5px]">Interpolated:</span>${radio('On', 'interp', true)}<span class="w-[2px]"></span>${radio('Off', 'interp', false)}
                                <span class="mr-px ml-[9px] whitespace-nowrap">Show Residual:</span>${one(sel('Off', 'w-[88px]'))}
                                <span class="mx-1">Sh</span>${btn('&gt;&gt;', 'h-4 w-[21px] rounded-[2px] bg-[#fbfbfb]')}
                            </div>
                        </div>
                        <div class="bg-[#f3f3f3]">
                            ${graphHead('FFT', 'Hz', 'w-[50px]', 'dBrA', 'w-[51px]')}
                            <div class="border-t-2 border-b border-t-[#f3f3f3] border-b-[#bfc4c6] px-[2px]">${meterFft()}</div>
                            <div class="flex h-[30px] items-center gap-[7px] pb-1 pl-[9px]">
                                <span class="w-[42px] whitespace-nowrap">FFT Length:</span>${one(sel('32K', 'w-[39px]'))}
                                <span class="w-8">Window:</span>${one(sel('AP-Equiripple', 'w-[127px]'))}
                                <span>Avera</span>${btn('&gt;&gt;', 'h-4 w-[21px] rounded-[2px] bg-[#fbfbfb]')}
                            </div>
                        </div>
                    </div>
                    ${dots('h-[6px]')}
                    <div class="flex h-[17px] items-center gap-[3px] bg-[#d2d3d4] px-[2px] text-[9px] text-black">
                        ${ico('plus')}<span>Add Meter</span><span class="ml-1">${caret()}</span>
                        <span class="ml-[5px]">${ico('savemeter')}</span><span>Save Meter Data</span>
                        <span class="ml-[6px]">${ico('run')}</span><span>Regulate</span>
                        <span class="ml-auto">${ico('dockup', 'size-[9px]')}</span>
                    </div>
                    <div class="flex bg-[#b4b7b9]">
                        <div class="grid flex-1 grid-cols-2 gap-x-1 gap-y-[4px] border-t-2 border-[#a4a9ac] pr-[7px] pb-px pl-[2px]">
                            ${meter('RMS Level', 'Vrms', 'w-[50px]', true, ['5.047', '5.034', 'Vrms'], 75, 75)}
                            ${meter('THD+N Ratio', '%', 'w-[50px]', false, ['0.000082', '0.000085', '%'], 0, 100)}
                            ${meter('Frequency', 'Hz', 'w-[50px]', false, ['1.00000', '1.00000', 'kHz'], 56, 91)}
                            ${meter('SINAD', 'dB', 'w-[50px]', false, ['121.676', '121.415', 'dB'], 100, 100)}
                        </div>
                        <div class="w-[10px] bg-[#f1f1f1] pt-3 pl-[6px]"><div class="h-24 w-px bg-[#85898b]"></div></div>
                    </div>
                </div>
            </div>` + foot('44.1000 kHz');

        // ---- shared by windows 2 and 3 ----
        const genSwitch = pl => `
            <div class="flex h-[21px] items-center gap-[5px] ${pl}">
                <span class="flex h-[17px] w-[53px] items-center justify-between rounded-[2px] border border-[#24485a] bg-[#bcdcf0] pr-1 pl-[4px]"><i class="size-[8px] bg-[#1d3a50]"></i>${toggle()}</span>
                ${check('Auto On', false, blue, 'gap-2')}
            </div>`;
        const levelBox = (ch, level, lw, pl) => `
            <fieldset class="mr-[4px] ml-[4px] border border-[#93a3a8]">
                <div class="flex h-[19px] items-center ${pl}">${check('Levels Track Ch1', true)}</div>
                <div class="flex h-[9px] items-center ${pl}"><span class="w-[92px] pl-[2px]">Level</span><span>DC Offset</span></div>
                <div class="flex h-5 items-center"><label for="lv${ch.length}" class="mr-[7px] text-right ${lw}">${ch}</label>${sel(level, 'w-[75px]', combo)('lv' + ch.length)}${spin()}<span class="w-1"></span>${one(sel('0.000 D', 'w-[58px]', combo))}${spin()}</div>
            </fieldset>`;
        const chans = `<div class="flex gap-px pl-[2px]">${[1, 2].map(n => `<button type="button" class="size-[10px] rounded-[1px] border border-[#42636e] bg-[#56808c] font-bold text-white">${n}</button>`).join('')}</div>`;

        const analyzer = (freq, lw, pl, tail) => `
            ${head('Settled Readings')}
            <div class="flex h-6 items-center ${pl}"><button type="button" class="flex h-[15px] w-[54px] items-center gap-[2px] border border-white bg-white pl-px">${ico('gear')}Settings...</button></div>
            ${sep('mr-[79px] ml-1')}
            ${head('THD+N', 'h-[17px] pl-[6px]')}
            ${row('Notch Tuning:', sel(freq, 'w-[93px]'), '', lw)}
            ${row('Weighting:', sel('None', 'w-[93px]'), '', lw)}
            ${sep('mt-1 mr-[79px] ml-1')}
            ${head('Bandpass Filter')}
            ${row('Selectivity:', sel('1/3 octave', 'w-[93px]'), '', lw)}
            ${row('Tune Mode:', sel(freq, 'w-[93px]'), '', lw)}
            ${sep('mt-1 mr-[79px] ml-1')}
            ${head('Reference Channel')}
            ${row('Channel:', sel('Ch1', 'w-8'), '', lw)}
            ${tail}`;

        const resultRow = name => `
            <tr class="h-[17px] border-b border-[#c4c8ca] bg-[#f1f2f2]">
                <td class="pl-[4px] text-[#2e3a86]">${name}</td>
                <td class="pl-[3px]">${one(sel('None', 'w-[75px]', 'h-4 border-[#c2c5c6] bg-[#dfe0e0]', 'caret'))}</td><td></td>
            </tr>`;
        const results = (names, c1) => `
            <div class="h-[100px] border border-[#b3bdc0] bg-[#f0f0f0]">
                <div class="flex h-[18px] items-center gap-[4px] bg-[#dae5e8] pl-[5px]">
                    ${ico('plus')}<span>Add</span>${ico('caret', 'size-[8px]')}<i class="mx-px h-[10px] w-px bg-[#a9b6ba]"></i>
                    <span class="flex items-center gap-[4px] opacity-40">${ico('del')}Delete</span><i class="h-[10px] w-px bg-[#a9b6ba]"></i>
                    <span class="mx-[6px] text-[#6b7c83]">🠅</span><i class="h-[10px] w-px bg-[#a9b6ba]"></i><span class="mx-[6px] text-[#6b7c83]">🠇</span><i class="h-[10px] w-px bg-[#a9b6ba]"></i>
                    ${ico('sort')}<span>Sort By</span>${ico('caret', 'size-[8px]')}
                </div>
                <table class="w-full table-fixed border-collapse">
                    <thead><tr class="h-[14px] bg-white"><th class="font-normal ${c1}">Data1 (Left)</th><th class="w-[83px] border-l border-[#e2e4e5] font-normal">Data2 (Right)</th><th class="border-l border-[#e2e4e5]"></th></tr></thead>
                    <tbody>${names.map(resultRow).join('')}</tbody>
                </table>
            </div>`;

        const startRow = `
            <div class="px-[2px] pt-[3px]"><button type="button" class="flex h-[18px] w-[94px] items-center justify-center gap-[5px] rounded-[2px] border border-[#2e5568] bg-[#b7d9ee] text-[#24485a] outline-1 -outline-offset-3 outline-dotted outline-[#2e5568] ${heavy}"><svg class="size-[8px]" viewBox="0 0 8 8"><path d="M1 0l6 4-6 4z" fill="#17324a"/></svg>Start</button></div>
            <div class="flex h-[23px] items-center gap-[11px] pl-[3px]">${check('Repeat', false)}${check('Append Graph Data', false)}</div>
            ${sep('mx-[2px]')}`;

        const chartBar = (x, xw, y, yw) => `
            <div class="flex h-[18px] items-center gap-[5px] bg-[#dae5e8] pr-[3px] pl-[2px] text-black">
                <span class="flex items-center gap-px">${ico('save')}${caret()}</span>${ico('copy')}${ico('print')}
                <i class="h-[11px] w-px bg-[#b9c6ca]"></i>${ico('zoom')}${ico('expand')}${ico('shrink')}<i class="w-px"></i>${ico('center')}<i class="w-px"></i>
                ${ico('grid')}<span class="flex items-center gap-px">${ico('plot')}${caret()}</span>${ico('fx')}${ico('gear')}
                <i class="h-[11px] w-px bg-[#b9c6ca]"></i><span>X</span>${one(flat(x, xw))}<span>Y</span>${one(flat(y, yw))}
                <span class="ml-auto text-[#173e7c]">${ico('ext', 'size-[9px]')}</span>
            </div>`;

        const legend = (w, pin) => `
            <div class="absolute top-[22px] right-[2px] border border-[#27445c] bg-white ${w}">
                <div class="flex h-[13px] items-center bg-[#2b80b6] pr-[2px] text-white ${heavy}"><span class="flex-1 text-center">Data</span><svg class="size-[7px]" viewBox="0 0 7 7"><path d="${pin}" fill="none" stroke="#dcebf4"/></svg></div>
                ${[['Ch1', 'bg-[#0a2a7a]'], ['Ch2', 'bg-[#cc1a1a]']].map(([n, c]) => `<div class="flex h-[14px] items-center gap-[3px] pl-[2px]">${check('', true)}<i class="size-[8px] ${c}"></i>${n}</div>`).join('')}
            </div>`;

        const thumb = (name, body, on) => `
            <figure class="flex w-20 flex-col items-center">
                <svg class="h-9 w-[58px] border-2 border-[#a9c1c9] bg-white" viewBox="0 0 54 32">
                    <path d="M4 3h46M4 8h46M4 13h46M4 18h46M4 23h46M4 28h46" stroke="#f1f2f3" stroke-width=".6"/><path d="M4 3v25" stroke="#cfd4d6" stroke-width=".6"/><path d="M6 30h44" stroke="#c9ced1" stroke-width=".8" stroke-dasharray="1 3"/><path d="M38 2h12" stroke="#b4b9bc" stroke-width=".8"/>${body}
                </svg>
                <figcaption class="flex h-[11px] w-full items-center justify-center ${on ? 'bg-[#94b1ba] text-white' : 'text-black'}">${name}</figcaption>
            </figure>`;

        const dataPane = (thumbs, time) => `
            <div class="flex h-[18px] items-center gap-[4px] bg-[#dae5e8] pr-1 pl-[3px] text-[9px] text-black">
                ${ico('first')}${ico('last')}<span class="w-px"></span>
                <span class="flex items-center gap-[2px]">${ico('plus')}Add</span>${caret()}
                <span class="flex items-center gap-[2px]">${ico('del')}Delete</span>${caret()}
                <span class="flex items-center gap-[2px]">${ico('sort')}Sort By</span>${caret()}
                <span class="flex items-center gap-[2px]">${ico('gear')}Details</span>
                <span class="ml-auto">${ico('dockup', 'size-[9px]')}</span>
            </div>
            <div class="flex h-[54px] gap-[3px] bg-white pt-[6px] pl-[4px]">${thumbs}</div>
            ${dots('h-[5px]')}
            <div class="flex h-[17px] items-center gap-[4px] bg-[#dae5e8] pr-1 pl-[3px] text-[9px] text-black">
                <span>Data Sets</span><span class="ml-[5px]">${check('', true, slate)}</span><span class="mx-1">${check('', false, slate)}</span>
                <span class="flex items-center gap-[2px]">${ico('data')}Clear Data</span>${caret()}
                <span class="flex items-center gap-[2px]">${ico('import')}Import</span>
                <span class="flex items-center gap-[2px]">${ico('export')}Export</span>
                <span class="flex items-center gap-[2px]">${ico('gear')}Data Settings</span>
                <span class="ml-auto">${ico('dockup', 'size-[9px]')}</span>
            </div>
            <div class="flex-1 bg-[#f0f0f0] pr-[22px]">
                <table class="w-full border-collapse text-left">
                    <thead><tr class="h-4 text-center"><th class="w-4 border-r border-b border-[#b4b8ba]"></th><th class="w-[56px] border-r border-b border-[#b4b8ba] font-normal">Data Set</th><th class="w-[89px] border-r border-b border-[#b4b8ba] font-normal">Time</th><th class="border-r border-b border-[#b4b8ba] font-normal">Notes</th></tr></thead>
                    <tbody><tr class="h-[15px] bg-white"><td class="border border-[#d3d6d8] pl-[2px]">${check('', true, plain, 'gap-1', 'text-[#7c8589]')}</td><td class="border border-[#d3d6d8] pl-[2px] whitespace-nowrap">Measured 1</td><td class="border border-[#d3d6d8] pl-[2px] whitespace-nowrap">${time}</td><td class="border border-[#d3d6d8]"></td></tr></tbody>
                </table>
            </div>`;

        const fallLine = '<path d="M4 15L34 25h14" fill="none" stroke="#9a9fa2" stroke-width=".6"/><rect x="42" y="24" width="2" height="2" fill="#555"/>';
        const riseLine = '<path d="M4 20L50 8" fill="none" stroke="#b9bdc0" stroke-width=".6"/>';
        const fftLine = '<path d="M4 25h46" fill="none" stroke="#a02a3c" stroke-width="1.600"/><path d="M27 25V6M25 24.500l2-3 2 3" fill="none" stroke="#c77a86" stroke-width=".7"/>';

        // ---- window 2: sweep ----
        document.getElementById('win2').innerHTML = top_() + `
            <div class="flex min-h-[498px]">
                ${side('Show Signal Path Setup', 'w-[18px]')}
                <div class="flex w-[243px] shrink-0 flex-col">
                    ${bar('Generator', ico('collapse', 'size-[9px]'))}
                    <div class="bg-[#b4c9cf] pb-[6px]">
                        ${genSwitch('pl-[71px]')}
                        ${row('Waveform:', sel('IMD', 'w-[93px]'), '', 'w-[64px]', 'mb-2 h-[22px]')}
                        ${levelBox('Ch1:', '-0.100 dBFS', 'w-[59px]', 'pl-[66px]')}
                        ${row('Type:', sel('SMPTE 4:1', 'w-[89px]'))}
                        ${row('Frequency 1:', sel('60.0000 Hz', 'w-[75px]', combo), spin())}
                        ${row('Frequency 2:', sel('7.00000 kHz', 'w-[75px]', combo), spin())}
                        <div class="flex h-[23px] items-center gap-[9px] pl-[71px]">${radio('Sum', 'imdmode', true)}${radio('Split', 'imdmode', false)}</div>
                        <div class="flex h-[25px] items-center pl-[4px]">Channels:</div>
                        ${chans}
                    </div>
                    ${bar('Analyzer')}
                    <div class="flex-1 bg-[#b4c9cf]">
                        ${analyzer('Generator Frequency', 'w-[64px]', 'pl-[72px]', `${sep('mt-[3px] mr-[79px] ml-1')}${head('IMD')}${row('Type:', sel('SMPTE/DIN', 'w-[93px]'), '', 'w-[64px]', 'h-[15px]')}`)}
                    </div>
                </div>
                <div class="ml-[5px] flex min-w-0 flex-1 flex-col">
                    ${bar('Measurements')}
                    ${tabs('Sweep')}
                    <div class="flex min-h-0 flex-1">
                        <div class="w-[225px] shrink-0 bg-[#dae5e8]">
                            ${startRow}
                            <div class="h-[3px]"></div>
                            ${row('Primary Source:', sel('Gen Level', 'w-[93px]'), '', 'w-[69px]')}
                            ${row('Start:', sel('-0.000 dBFS', 'w-[77px]', combo), spin(), 'w-[69px]', 'h-5')}
                            ${row('Stop:', sel('-60.000 dBFS', 'w-[77px]', combo), spin(), 'w-[69px]')}
                            ${row('Sweep:', sel('Linear', 'w-[93px]'), '', 'w-[69px]', 'h-5')}
                            ${row('Points:', box('31', 'w-[34px]'), nud() + btn('Edit...', 'ml-[5px] h-[15px] w-11 bg-white'), 'w-[69px]')}
                            ${row('Step Size:', box('+2.000 dBFS', 'w-[93px]'), '', 'w-[69px]', 'h-5')}
                            <div class="flex h-[19px] items-center justify-between pr-[45px] pl-[76px]">${check('Regulate each point', false)}${ico('regpt')}</div>
                            ${sep('mt-[3px] mr-[43px] ml-[2px]')}
                            <div class="h-[3px]"></div>
                            ${row('Reading Rate:', sel('16/sec', 'w-[93px]'), '', 'w-[69px]')}
                            ${row('Pre-Sweep Delay:', sel('200.0 ms', 'w-[93px]', combo), '', 'w-[69px]')}
                            ${head('Results', 'h-[15px] pl-[2px]')}
                            ${results(['RMS Level', 'IMD Ratio'], 'w-[131px]')}
                            ${sep('mt-[2px] mr-[54px] ml-1')}
                            ${head('Nesting', 'h-[17px] pl-[6px]')}
                            ${row('Secondary Source:', sel('None', 'w-[93px]'), '', 'w-[71px]', 'h-[15px]')}
                        </div>
                        <div class="flex min-w-0 flex-1 flex-col">
                            ${chartBar('dBFS', 'w-[38px]', 'dB', 'w-[34px]')}
                            <div class="relative">${imdChart()}${legend('w-[78px]', 'M0 3.500h2.500M2.500 1v5M2.500 2h4v3h-4')}</div>
                            ${dataPane(thumb('RMS Level', riseLine) + thumb('IMD Ratio', fallLine, true), '2024/9/30 17:10:09')}
                        </div>
                    </div>
                </div>
            </div>` + foot('44.1000 kHz');

        // ---- window 3: FFT ----
        document.getElementById('win3').innerHTML = top_() + `
            <div class="flex">
                ${side('Show Signal Path Setup', 'w-[18px]')}
                <div class="w-[240px] shrink-0">
                    ${bar('Generator', ico('collapse', 'size-[9px]'))}
                    <div class="bg-[#b4c9cf] pb-[5px]">
                        ${genSwitch('pl-[68px]')}
                        ${row('Waveform:', sel('JTEST_2448.WAV', 'w-[93px]'), '', 'w-[61px]', 'h-[22px]')}
                        ${row('Description:', box('24 bits, 48 kHz, 2 Chs', 'w-[89px]', 'border-[#dfe6e8] bg-black text-[#1fd61f]', 'readonly'), '', 'w-[61px]', 'mb-[3px] h-[26px]')}
                        ${levelBox('Ch1 (1):', '-0.000 dBFS', 'w-[56px]', 'pl-[63px]')}
                        <div class="flex h-[17px] items-center pl-[68px]">${check('Bit Exact', false)}</div>
                        ${sep('mt-px mr-[6px] ml-1')}
                        ${head('File Playback', 'h-[17px] pl-[6px]')}
                        <div class="flex h-4 items-center gap-[9px] pl-[68px]">${radio('Seconds', 'play', true)}${radio('Samples', 'play', false)}</div>
                        ${row('Length:', box('60.000 s', 'w-[89px]', 'border-[#dfe6e8] bg-black text-[#1fd61f]', 'readonly'), '', 'w-[61px]', 'h-5')}
                        ${row('Start Position:', box('0.000 s', 'w-[76px]'), '', 'w-[61px]')}
                        <div class="flex h-[18px] items-center pl-[68px]">${check('Loop Waveform', true)}</div>
                        <div class="flex h-[25px] items-center gap-1 pl-[4px]"><span class="w-[84px]">Channel Assignments:</span><button type="button" class="flex h-[14px] w-[41px] items-center justify-between border border-[#dfe9ec] bg-[#3b626d] px-[2px] font-bold text-white">Default${ico('drop', 'size-[6px]')}</button></div>
                        ${chans}
                    </div>
                    ${bar('Analyzer')}
                    <div class="flex h-[189px] overflow-hidden bg-[#b4c9cf]">
                        <div class="min-w-0 flex-1">${analyzer('Measured Frequency', 'w-[61px]', 'pl-[69px]', '').replaceAll('mr-[79px]', 'mr-[67px]')}</div>
                        <div class="w-3 bg-[#f0f0f0] pt-[11px] pl-[6px]"><div class="h-[132px] w-px bg-[#7c8184]"></div></div>
                    </div>
                </div>
                <div class="ml-[5px] flex min-w-0 flex-1 flex-col">
                    ${bar('Measurements')}
                    ${tabs('FFT')}
                    <div class="flex min-h-0 flex-1">
                        <div class="w-[239px] shrink-0 bg-[#dae5e8]">
                            ${startRow}
                            <div class="h-[7px]"></div>
                            ${row('Acq Length:', sel('Auto', 'w-[74px]'), '', 'w-[97px]')}
                            ${row('FFT Length:', sel('131072', 'w-[74px]', combo), spin(), 'w-[97px]', 'h-5')}
                            ${row('FFT Window:', sel('AP-Equiripple', 'w-[121px]'), '', 'w-[97px]')}
                            ${row('Trigger:', sel('Free Run', 'w-[74px]'), '', 'w-[97px]', 'h-5')}
                            ${row('Averages:', sel('Power', 'w-[74px]'), `<span class="w-1"></span>` + one(box('3', 'w-[38px]')) + nud(), 'w-[97px]')}
                            <div class="flex h-5 items-center justify-between pr-[61px] pl-[4px]">${radio('Delay (s):', 'delay', true)}${one(box('250.0 ms', 'w-[74px]'))}</div>
                            <div class="flex h-[19px] items-center justify-between pr-[61px] pl-[4px]">${radio('Delay (samples):', 'delay', false, 'disabled')}${one(box('0', 'w-[74px]', 'border-[#e2e7e9] bg-[#edf0f1] text-[#8a989d]', 'disabled'))}</div>
                            ${row('Bandwidth (Sample Rate):', sel('Use Signal Path', 'w-[121px]'), '', 'w-[97px]')}
                            ${sep('mt-[3px] mx-[2px]')}
                            <div class="flex h-[23px] items-center justify-between pr-[61px] pl-[4px]">${check('Save To File', false)}${btn('File Settings...', 'h-[14px] w-[74px] bg-[#f4f6f7] text-[#5e6d73]')}</div>
                            ${head('Results', 'h-[15px] pl-[2px]')}
                            ${results(['FFT Spectrum', 'Scope'], 'w-[144px]')}
                            ${sep('mt-[2px] mr-[40px] ml-1')}
                            ${head('Nesting', 'h-[17px] pl-[6px]')}
                            ${row('Secondary Source:', sel('None', 'w-[93px]'), '', 'w-[97px]', 'h-[15px]')}
                        </div>
                        <div class="flex min-w-0 flex-1 flex-col">
                            ${chartBar('Hz', 'w-[34px]', 'dBrA', 'w-[46px]')}
                            <div class="relative">${jtestChart()}${legend('w-[103px]', 'M3.500 7V4.500M1 4.500h5M2 4.500v-4h3v4')}</div>
                            ${dataPane(thumb('FFT Spectrum', fftLine, true) + thumb('Scope', ''), '2024/9/30 17:16:38')}
                        </div>
                    </div>
                </div>
            </div>` + foot('48.0000 kHz');
    </script>
</body>
</html>
